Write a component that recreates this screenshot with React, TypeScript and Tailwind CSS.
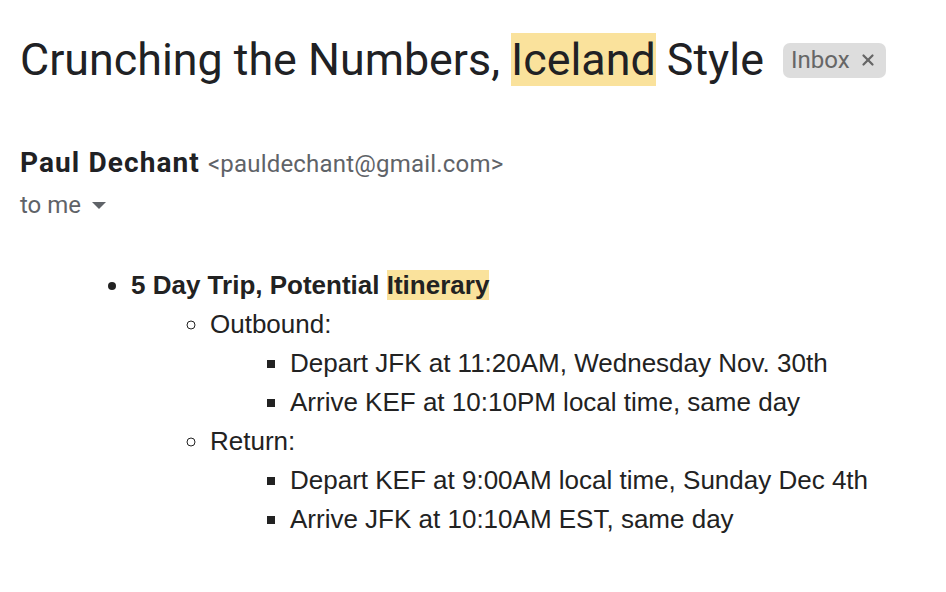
import { X } from 'lucide-react'

const sans = "font-['Roboto','Liberation_Sans',sans-serif]"
const body = "font-['Liberation_Sans',Arial,sans-serif]"

function Caret() {
  return (
    <svg width="14" height="8" viewBox="0 0 14 8" className="ml-[11px] mt-[2px]" aria-hidden="true">
      <path d="M0 0h14L7 7z" fill="#5f6368" />
    </svg>
  )
}

export default function App() {
  return (
    <div className="min-h-[592px] w-[946px] bg-white px-5 pt-8">
      {/* subject line */}
      <div className="flex items-center">
        <h1 className={`${sans} text-[44.8px] leading-[56px] font-normal text-[#202124]`}>
          Crunching the Numbers, <span className="bg-[#fae29c]">Iceland</span> Style
        </h1>
        <span
          className={`${sans} ml-[19px] flex h-[35px] items-center gap-[9px] rounded-[7px] bg-[#dddddd] pl-2 pr-[9px] text-[24px] text-[#666666]`}
        >
          Inbox
          <X className="size-[18px]" strokeWidth={3} />
        </span>
      </div>

      {/* sender */}
      <div className={`${sans} mt-[57px] flex items-baseline leading-[36px]`}>
        <span className="text-[28px] font-bold tracking-[1.1px] text-[#202124]">Paul Dechant</span>
        <span className="ml-[8px] text-[24px] tracking-[0.2px] text-[#5f6368]">&lt;pauldechant@gmail.com&gt;</span>
      </div>
      <div className={`${sans} mt-[7px] flex items-center text-[24px] leading-[32px] text-[#5f6368]`}>
        to me
        <Caret />
      </div>

      {/* message body */}
      <ul className={`${body} mt-[45px] list-disc pl-[111px] text-[26px] leading-[39px] text-[#222222]`}>
        <li>
          <b>
            5 Day Trip, Potential <span className="bg-[#fae29c]">Itinerary</span>
          </b>
          <ul className="list-[circle] pl-[79px]">
            <li>
              Outbound:
              <ul className="list-[square] pl-[80px]">
                <li>Depart JFK at 11:20AM, Wednesday Nov. 30th</li>
                <li>Arrive KEF at 10:10PM local time, same day</li>
              </ul>
            </li>
            <li>
              Return:
              <ul className="list-[square] pl-[80px]">
                <li>Depart KEF at 9:00AM local time, Sunday Dec 4th</li>
                <li>Arrive JFK at 10:10AM EST, same day</li>
              </ul>
            </li>
          </ul>
        </li>
      </ul>
    </div>
  )
}
